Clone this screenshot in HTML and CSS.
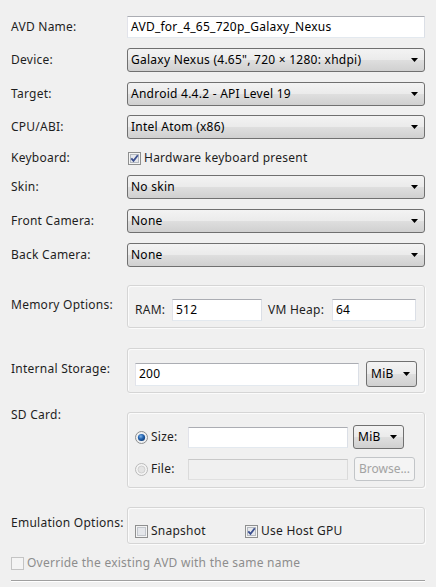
FILE: index.html
```html
<!DOCTYPE html>
<html>
<head>
<meta charset="utf-8">
<link rel="stylesheet" href="styles.css">
</head>
<body>
<div class="form">
  <div class="row r-name">
    <span class="lbl">AVD Name:</span>
    <div class="field"><div class="text">AVD_for_4_65_720p_Galaxy_Nexus</div></div>
  </div>
  <div class="row r-gap10">
    <span class="lbl">Device:</span>
    <div class="field"><div class="combo"><span>Galaxy Nexus (4.65", 720 × 1280: xhdpi)</span><svg class="arrow" width="7" height="4" viewBox="0 0 7 4"><path d="M0 0h7L3.5 4z" fill="#000"/></svg></div></div>
  </div>
  <div class="row r-gap10">
    <span class="lbl">Target:</span>
    <div class="field"><div class="combo"><span>Android 4.4.2 - API Level 19</span><svg class="arrow" width="7" height="4" viewBox="0 0 7 4"><path d="M0 0h7L3.5 4z" fill="#000"/></svg></div></div>
  </div>
  <div class="row r-gap9">
    <span class="lbl">CPU/ABI:</span>
    <div class="field"><div class="combo"><span>Intel Atom (x86)</span><svg class="arrow" width="7" height="4" viewBox="0 0 7 4"><path d="M0 0h7L3.5 4z" fill="#000"/></svg></div></div>
  </div>
  <div class="row r-kbd">
    <span class="lbl">Keyboard:</span>
    <div class="field check-field">
      <svg class="cb" width="13" height="13" viewBox="0 0 13 13"><rect x=".5" y=".5" width="12" height="12" fill="#f4f4f4" stroke="#8e8f8f"/><rect x="2.5" y="2.5" width="8" height="8" fill="#e6e8ec" stroke="#b4b9c0"/><path d="M3.3 6.3l2.2 2.6L9.8 3.2" stroke="#3b4f8f" stroke-width="1.8" fill="none"/></svg>
      <span>Hardware keyboard present</span>
    </div>
  </div>
  <div class="row r-gap7">
    <span class="lbl">Skin:</span>
    <div class="field"><div class="combo"><span>No skin</span><svg class="arrow" width="7" height="4" viewBox="0 0 7 4"><path d="M0 0h7L3.5 4z" fill="#000"/></svg></div></div>
  </div>
  <div class="row r-gap10">
    <span class="lbl">Front Camera:</span>
    <div class="field"><div class="combo"><span>None</span><svg class="arrow" width="7" height="4" viewBox="0 0 7 4"><path d="M0 0h7L3.5 4z" fill="#000"/></svg></div></div>
  </div>
  <div class="row r-gap10">
    <span class="lbl">Back Camera:</span>
    <div class="field"><div class="combo"><span>None</span><svg class="arrow" width="7" height="4" viewBox="0 0 7 4"><path d="M0 0h7L3.5 4z" fill="#000"/></svg></div></div>
  </div>

  <div class="grow g-mem">
    <span class="lbl lbl-mem">Memory Options:</span>
    <div class="group mem">
      <span class="ram-lbl">RAM:</span>
      <div class="text ram">512</div>
      <span class="heap-lbl">VM Heap:</span>
      <div class="text heap">64</div>
    </div>
  </div>

  <div class="grow g-int">
    <span class="lbl lbl-int">Internal Storage:</span>
    <div class="group int">
      <div class="text int-in">200</div>
      <div class="combo small tall"><span>MiB</span><svg class="arrow" width="7" height="4" viewBox="0 0 7 4"><path d="M0 0h7L3.5 4z" fill="#000"/></svg></div>
    </div>
  </div>

  <div class="grow g-sd">
    <span class="lbl">SD Card:</span>
    <div class="group sd">
      <div class="sd-row">
        <div class="opt">
          <svg class="rb" width="13" height="13" viewBox="0 0 13 13"><defs><radialGradient id="rg" cx="40%" cy="35%" r="70%"><stop offset="0" stop-color="#7fb4e8"/><stop offset=".5" stop-color="#2464b0"/><stop offset="1" stop-color="#0d3a74"/></radialGradient></defs><circle cx="6.5" cy="6.5" r="6" fill="#eef0f2" stroke="#8e8f8f"/><circle cx="6.5" cy="6.5" r="3.6" fill="url(#rg)"/></svg>
          <span>Size:</span>
        </div>
        <div class="text sd-in"></div>
        <div class="combo small"><span>MiB</span><svg class="arrow" width="7" height="4" viewBox="0 0 7 4"><path d="M0 0h7L3.5 4z" fill="#000"/></svg></div>
      </div>
      <div class="sd-row file-row">
        <div class="opt">
          <svg class="rb" width="13" height="13" viewBox="0 0 13 13"><circle cx="6.5" cy="6.5" r="6" fill="#f4f4f4" stroke="#b9b9b9"/><circle cx="6.5" cy="6.5" r="3.5" fill="#e4e4e4" stroke="#d0d0d0"/></svg>
          <span>File:</span>
        </div>
        <div class="text sd-in disabled"></div>
        <div class="btn">Browse...</div>
      </div>
    </div>
  </div>

  <div class="grow g-emu">
    <span class="lbl lbl-emu">Emulation Options:</span>
    <div class="group emu">
      <div class="emu-item snap">
        <svg class="cb" width="13" height="13" viewBox="0 0 13 13"><rect x=".5" y=".5" width="12" height="12" fill="#f4f4f4" stroke="#8e8f8f"/><rect x="2.5" y="2.5" width="8" height="8" fill="#e4e6ea" stroke="#c2c6cc"/></svg>
        <span>Snapshot</span>
      </div>
      <div class="emu-item">
        <svg class="cb" width="13" height="13" viewBox="0 0 13 13"><rect x=".5" y=".5" width="12" height="12" fill="#f4f4f4" stroke="#8e8f8f"/><rect x="2.5" y="2.5" width="8" height="8" fill="#e6e8ec" stroke="#b4b9c0"/><path d="M3.3 6.3l2.2 2.6L9.8 3.2" stroke="#3b4f8f" stroke-width="1.8" fill="none"/></svg>
        <span>Use Host GPU</span>
      </div>
    </div>
  </div>

  <div class="override">
    <svg class="cb" width="13" height="13" viewBox="0 0 13 13"><rect x=".5" y=".5" width="12" height="12" fill="#f4f4f4" stroke="#c4c4c4"/></svg>
    <span>Override the existing AVD with the same name</span>
  </div>
  <div class="sep"></div>
</div>
</body>
</html>
```

FILE: styles.css
```css
html, body {
  margin: 0;
  background: #f0f0f0;
}
body {
  font-family: "Noto Sans", "Open Sans", sans-serif;
  font-size: 12px;
  line-height: 16px;
  letter-spacing: 0.25px;
  color: #1e1e1e;
}
.form {
  display: flex;
  flex-direction: column;
  padding: 16px 11px 0 11px;
}
.row {
  display: flex;
  align-items: center;
}
.lbl {
  width: 116px;
  flex: none;
  white-space: nowrap;
}
.field {
  flex: 1;
  min-width: 0;
}
.r-gap10 { margin-top: 10px; }
.r-gap9 { margin-top: 9px; }
.r-gap7 { margin-top: 7px; }
.r-kbd { margin-top: 9px; height: 20px; }

.text {
  box-sizing: border-box;
  height: 22px;
  background: #fff;
  border: 1px solid;
  border-color: #abadb3 #dbdfe6 #e3e9ef #e2e3ea;
  padding: 0 3px;
  display: flex;
  align-items: center;
  white-space: nowrap;
  color: #000;
}
.combo {
  box-sizing: border-box;
  height: 24px;
  border: 1px solid #707070;
  border-radius: 3px;
  background: linear-gradient(#f3f3f3, #ebebeb 48%, #dedede 52%, #d0d0d0);
  display: flex;
  align-items: center;
  justify-content: space-between;
  padding: 0 6px 0 3px;
  white-space: nowrap;
  color: #000;
}
.arrow { flex: none; }

.check-field {
  display: flex;
  align-items: center;
}
.cb, .rb { flex: none; display: block; }
.check-field .cb { margin-left: 1px; margin-right: 3px; }

.grow {
  display: flex;
  align-items: flex-start;
}
.group {
  flex: 1;
  border: 1px solid #d5d5d5;
  border-radius: 3px;
  box-shadow: inset 1px 1px 0 #fbfbfb, 1px 1px 0 #fbfbfb;
}

/* Memory */
.g-mem { margin-top: 18px; }
.lbl-mem { padding-top: 12px; }
.mem {
  display: flex;
  align-items: center;
  padding: 13px 7px 6px 7px;
}
.ram-lbl { width: 37px; flex: none; }
.ram { width: 90px; flex: none; }
.heap-lbl { width: 64px; flex: none; margin-left: 6px; }
.heap { width: 84px; flex: none; }

/* Internal storage */
.g-int { margin-top: 20px; }
.lbl-int { padding-top: 13px; }
.int {
  display: flex;
  align-items: center;
  gap: 7px;
  padding: 12px 7px 5px 7px;
}
.int-in { width: 224px; height: 23px; flex: none; }
.small { width: 51px; flex: none; padding-left: 4px; }
.tall { height: 26px; }

/* SD card */
.g-sd { margin-top: 14px; }
.sd {
  margin-top: 5px;
  display: flex;
  flex-direction: column;
  gap: 8px;
  padding: 12px 8px 6px 7px;
}
.sd-row {
  display: flex;
  align-items: center;
  height: 24px;
  gap: 5px;
}
.opt {
  width: 48px;
  flex: none;
  display: flex;
  align-items: center;
  gap: 3px;
}
.sd-in { width: 160px; height: 21px; flex: none; }
.disabled {
  background: #f0f0f0;
  border-color: #c8c8c8 #dadada #e0e0e0 #dadada;
}
.btn {
  box-sizing: border-box;
  width: 61px;
  height: 24px;
  margin-left: 1px;
  border: 1px solid #c2c5c8;
  border-radius: 3px;
  background: #f4f4f4;
  color: #a3a3a3;
  display: flex;
  align-items: center;
  justify-content: center;
  letter-spacing: 0;
}

/* Emulation */
.g-emu { margin-top: 19px; }
.lbl-emu { padding-top: 8px; }
.emu {
  display: flex;
  align-items: center;
  height: 16px;
  padding: 15px 7px 4px 7px;
}
.emu-item {
  display: flex;
  align-items: center;
  gap: 3px;
}
.snap { width: 110px; flex: none; }

.override {
  margin-top: 11px;
  display: flex;
  align-items: center;
  gap: 3px;
  color: #8d8d8d;
  height: 16px;
}
.sep {
  margin-top: 9px;
  height: 0;
  border-top: 1px solid #a0a0a0;
  border-bottom: 1px solid #fff;
}
```
